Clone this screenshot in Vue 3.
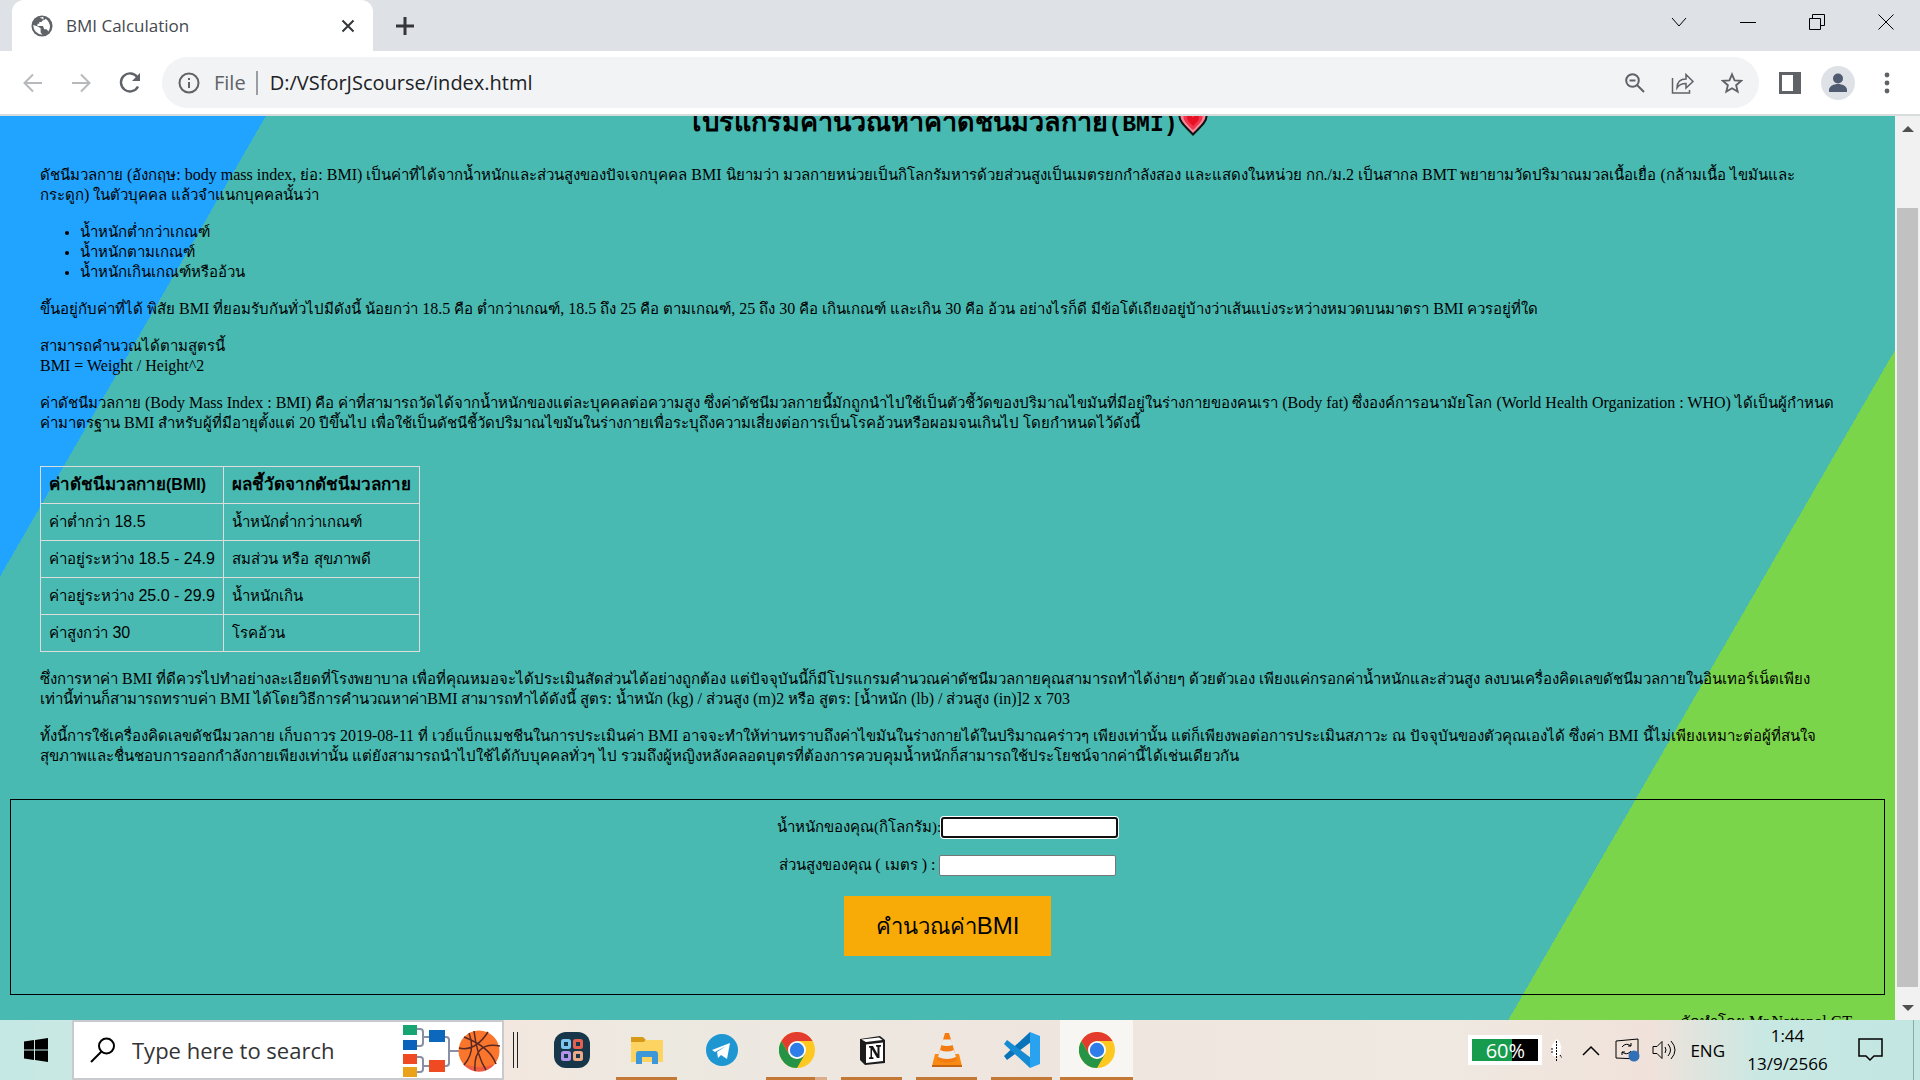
<script setup>
import { ref, onMounted } from 'vue'

const weight = ref('')
const height = ref('')
const weightInput = ref(null)

const intro = [
  'ดัชนีมวลกาย (อังกฤษ: body mass index, ย่อ: BMI) เป็นค่าที่ได้จากน้ำหนักและส่วนสูงของปัจเจกบุคคล BMI นิยามว่า มวลกายหน่วยเป็นกิโลกรัมหารด้วยส่วนสูงเป็นเมตรยกกำลังสอง และแสดงในหน่วย กก./ม.2 เป็นสากล BMT พยายามวัดปริมาณมวลเนื้อเยื่อ (กล้ามเนื้อ ไขมันและ',
  'กระดูก) ในตัวบุคคล แล้วจำแนกบุคคลนั้นว่า',
]
const groups = ['น้ำหนักต่ำกว่าเกณฑ์', 'น้ำหนักตามเกณฑ์', 'น้ำหนักเกินเกณฑ์หรืออ้วน']
const details = [
  ['ขึ้นอยู่กับค่าที่ได้ พิสัย BMI ที่ยอมรับกันทั่วไปมีดังนี้ น้อยกว่า 18.5 คือ ต่ำกว่าเกณฑ์, 18.5 ถึง 25 คือ ตามเกณฑ์, 25 ถึง 30 คือ เกินเกณฑ์ และเกิน 30 คือ อ้วน อย่างไรก็ดี มีข้อโต้เถียงอยู่บ้างว่าเส้นแบ่งระหว่างหมวดบนมาตรา BMI ควรอยู่ที่ใด'],
  ['สามารถคำนวณได้ตามสูตรนี้', 'BMI = Weight / Height^2'],
  [
    'ค่าดัชนีมวลกาย (Body Mass Index : BMI) คือ ค่าที่สามารถวัดได้จากน้ำหนักของแต่ละบุคคลต่อความสูง ซึ่งค่าดัชนีมวลกายนี้มักถูกนำไปใช้เป็นตัวชี้วัดของปริมาณไขมันที่มีอยู่ในร่างกายของคนเรา (Body fat) ซึ่งองค์การอนามัยโลก (World Health Organization : WHO) ได้เป็นผู้กำหนด',
    'ค่ามาตรฐาน BMI สำหรับผู้ที่มีอายุตั้งแต่ 20 ปีขึ้นไป เพื่อใช้เป็นดัชนีชี้วัดปริมาณไขมันในร่างกายเพื่อระบุถึงความเสี่ยงต่อการเป็นโรคอ้วนหรือผอมจนเกินไป โดยกำหนดไว้ดังนี้',
  ],
]
const headings = ['ค่าดัชนีมวลกาย(BMI)', 'ผลชี้วัดจากดัชนีมวลกาย']
const rows = [
  ['ค่าต่ำกว่า 18.5', 'น้ำหนักต่ำกว่าเกณฑ์'],
  ['ค่าอยู่ระหว่าง 18.5 - 24.9', 'สมส่วน หรือ สุขภาพดี'],
  ['ค่าอยู่ระหว่าง 25.0 - 29.9', 'น้ำหนักเกิน'],
  ['ค่าสูงกว่า 30', 'โรคอ้วน'],
]
const notes = [
  [
    'ซึ่งการหาค่า BMI ที่ดีควรไปทำอย่างละเอียดที่โรงพยาบาล เพื่อที่คุณหมอจะได้ประเมินสัดส่วนได้อย่างถูกต้อง แต่ปัจจุบันนี้ก็มีโปรแกรมคำนวณค่าดัชนีมวลกายคุณสามารถทำได้ง่ายๆ ด้วยตัวเอง เพียงแค่กรอกค่าน้ำหนักและส่วนสูง ลงบนเครื่องคิดเลขดัชนีมวลกายในอินเทอร์เน็ตเพียง',
    'เท่านี้ท่านก็สามารถทราบค่า BMI ได้โดยวิธีการคำนวณหาค่าBMI สามารถทำได้ดังนี้ สูตร: น้ำหนัก (kg) / ส่วนสูง (m)2 หรือ สูตร: [น้ำหนัก (lb) / ส่วนสูง (in)]2 x 703',
  ],
  [
    'ทั้งนี้การใช้เครื่องคิดเลขดัชนีมวลกาย เก็บถาวร 2019-08-11 ที่ เวย์แบ็กแมชชีนในการประเมินค่า BMI อาจจะทำให้ท่านทราบถึงค่าไขมันในร่างกายได้ในปริมาณคร่าวๆ เพียงเท่านั้น แต่ก็เพียงพอต่อการประเมินสภาวะ ณ ปัจจุบันของตัวคุณเองได้ ซึ่งค่า BMI นี้ไม่เพียงเหมาะต่อผู้ที่สนใจ',
    'สุขภาพและชื่นชอบการออกกำลังกายเพียงเท่านั้น แต่ยังสามารถนำไปใช้ได้กับบุคคลทั่วๆ ไป รวมถึงผู้หญิงหลังคลอดบุตรที่ต้องการควบคุมน้ำหนักก็สามารถใช้ประโยชน์จากค่านี้ได้เช่นเดียวกัน',
  ],
]

// Splits a line into Thai and Latin runs, since the two scripts are set at different sizes.
const runs = (text) =>
  text.split(/([\u0e00-\u0e7f]+)/).filter(Boolean).map((part) => ({
    text: part,
    kind: /[\u0e00-\u0e7f]/.test(part) ? 'thai' : 'latin',
  }))

onMounted(() => weightInput.value.focus())
</script>

<template>
  <div class="screen">
    <header class="tabs">
      <div class="tab">
        <svg class="globe" viewBox="0 0 24 24"><circle cx="12" cy="12" r="11.5" fill="#5f6368" /><path d="M2.500 11l5 1.500 3 2v4.500l2 2.500A10 10 0 0 1 2.500 11zM9.500 3l4-1v3l-2 2.500h-2.500v2h-2v2.500h6l1.500 3.500h2.500l2 2.500a10 10 0 0 0-3-14l-2 2-1.500-2z" fill="#fff" /></svg>
        <span class="title">BMI Calculation</span>
        <button class="plain" aria-label="Close tab"><svg width="14" height="14" viewBox="0 0 14 14"><path d="M1.500 1.500l11 11M12.500 1.500l-11 11" /></svg></button>
      </div>
      <button class="plain plus" aria-label="New tab"><svg width="18" height="18" viewBox="0 0 18 18"><path d="M9 0v18M0 9h18" /></svg></button>
      <div class="window-controls">
        <button class="plain" aria-label="Search tabs"><svg width="16" height="16" viewBox="0 0 16 16"><path d="M1 4l7 8 7-8" /></svg></button>
        <button class="plain" aria-label="Minimize"><svg width="16" height="16" viewBox="0 0 16 16"><path d="M0 8.500h16" /></svg></button>
        <button class="plain" aria-label="Restore"><svg width="16" height="16" viewBox="0 0 16 16"><path d="M.5 4.500h11v11H.5zM3.500 4.500v-4h12v11h-4" /></svg></button>
        <button class="plain" aria-label="Close"><svg width="16" height="16" viewBox="0 0 16 16"><path d="M.5.5l15 15M15.500.5l-15 15" /></svg></button>
      </div>
    </header>

    <nav class="toolbar">
      <button class="plain faded" aria-label="Back"><svg width="20" height="20" viewBox="0 0 20 20"><path d="M19 10H2M10 1.500L1.500 10l8.500 8.500" /></svg></button>
      <button class="plain faded" aria-label="Forward"><svg width="20" height="20" viewBox="0 0 20 20"><path d="M1 10h17M10 1.500l8.500 8.500-8.500 8.500" /></svg></button>
      <button class="plain" aria-label="Reload"><svg width="22" height="22" viewBox="0 0 22 22"><path d="M18.500 5.500A9 9 0 1 0 19 14.500" stroke-width="2.400" /><path d="M21 1v8h-8z" fill="#5f6368" stroke="none" /></svg></button>
      <div class="address">
        <svg width="22" height="22" viewBox="0 0 22 22"><circle cx="11" cy="11" r="9.500" /><path d="M11 10v6M11 6v2" /></svg>
        <span class="scheme">File</span>
        <span class="url">D:/VSforJScourse/index.html</span>
        <button class="plain" aria-label="Zoom"><svg width="20" height="20" viewBox="0 0 20 20"><circle cx="7.500" cy="7.500" r="6.300" /><path d="M12 12l7 7M4.500 7.500h6" /></svg></button>
        <button class="plain" aria-label="Share"><svg width="24" height="22" viewBox="0 0 24 22"><path class="thin" d="M1.500 6v15h17v-3M6 16c0-7 4-9 9-9V2.500l7 7-7 6.500v-4.500c-4 0-7 1-9 4.500z" /></svg></button>
        <button class="plain" aria-label="Bookmark"><svg width="22" height="22" viewBox="0 0 24 24"><path d="M12 2.500l2.800 6.600 7.200.6-5.500 4.700 1.700 7-6.200-3.700-6.200 3.700 1.700-7L2 9.700l7.200-.6z" /></svg></button>
      </div>
      <button class="plain panel" aria-label="Side panel"><svg width="22" height="22" viewBox="0 0 22 22"><path d="M0 0h22v22H0zM3 3v16h11V3z" fill="#5f6368" fill-rule="evenodd" stroke="none" /></svg></button>
      <button class="plain" aria-label="Profile"><svg width="34" height="34" viewBox="0 0 34 34"><g stroke="none"><circle cx="17" cy="17" r="17" fill="#dee1e6" /><circle cx="17" cy="12.500" r="5" fill="#4f5b70" /><path d="M8 26v-2c0-4 5-6 9-6s9 2 9 6v2z" fill="#4f5b70" /></g></svg></button>
      <button class="plain" aria-label="Menu"><svg width="8" height="22" viewBox="0 0 8 22"><g fill="#5f6368" stroke="none"><circle cx="4" cy="3" r="2.400" /><circle cx="4" cy="11" r="2.400" /><circle cx="4" cy="19" r="2.400" /></g></svg></button>
    </nav>

    <div class="viewport">
      <main class="page">
        <h1><span v-for="(run, i) in runs('โปรแกรมคำนวณหาค่าดัชนีมวลกาย(BMI)')" :key="i" :class="run.kind">{{ run.text }}</span><svg class="heart" viewBox="0 0 30 28"><path d="M15 26.500C9 20 1.500 14.500 1.500 8.500 1.500 1 11.500-.5 15 6.500 18.500-.5 28.500 1 28.500 8.500c0 6-7.500 11.500-13.500 18z" fill="#f58a9b" stroke="#111" stroke-width="2" /><path d="M15 22C9 16 5.500 13 5.500 9c0-5 7.500-5.500 9.500 0 2-5.500 9.500-5 9.500 0 0 4-3.500 7-9.500 13z" fill="#f0354c" /><path d="M15 18c-4-4-6-6-6-8.500 0-3 4.500-3 6 .5 1.500-3.500 6-3.500 6-.5 0 2.500-2 4.500-6 8.500z" fill="#e81123" /></svg></h1>
        <article>
          <p><span v-for="line in intro" :key="line" class="line"><span v-for="(run, i) in runs(line)" :key="i" :class="run.kind">{{ run.text }}</span></span></p>
          <ul>
            <li v-for="group in groups" :key="group">{{ group }}</li>
          </ul>
          <p v-for="(lines, n) in details" :key="n"><span v-for="line in lines" :key="line" class="line"><span v-for="(run, i) in runs(line)" :key="i" :class="run.kind">{{ run.text }}</span></span></p>
          <table>
            <thead><tr><th v-for="cell in headings" :key="cell"><span v-for="(run, i) in runs(cell)" :key="i" :class="run.kind">{{ run.text }}</span></th></tr></thead>
            <tbody><tr v-for="row in rows" :key="row[0]"><td v-for="cell in row" :key="cell"><span v-for="(run, i) in runs(cell)" :key="i" :class="run.kind">{{ run.text }}</span></td></tr></tbody>
          </table>
          <p v-for="(lines, n) in notes" :key="n"><span v-for="line in lines" :key="line" class="line"><span v-for="(run, i) in runs(line)" :key="i" :class="run.kind">{{ run.text }}</span></span></p>
        </article>
        <form @submit.prevent>
          <div class="field"><label for="weight">น้ำหนักของคุณ(กิโลกรัม):</label><input id="weight" ref="weightInput" v-model="weight" class="active" type="text"></div>
          <div class="field"><label for="height">ส่วนสูงของคุณ <span class="latin">( </span>เมตร<span class="latin"> ) :&nbsp;</span></label><input id="height" v-model="height" type="text"></div>
          <button class="submit" type="submit">คำนวณค่า<span class="latin">BMI</span></button>
        </form>
        <footer>จัดทำโดย <span class="latin">Mr.Nattapol GT</span></footer>
      </main>
      <div class="scrollbar">
        <svg width="12" height="6" viewBox="0 0 12 6"><path d="M0 6l6-6 6 6z" fill="#505050" /></svg>
        <div class="track"><div class="thumb"></div></div>
        <svg width="12" height="6" viewBox="0 0 12 6"><path d="M0 0l6 6 6-6z" fill="#505050" /></svg>
      </div>
    </div>

    <div class="taskbar">
      <button class="plain start" aria-label="Start"><svg width="24" height="24" viewBox="0 0 24 24"><path d="M0 3.500L10 2v9.500H0zM11 1.900L24 0v11.500H11zM0 12.500h10V22L0 20.500zM11 12.500h13V24l-13-1.900z" fill="#000" stroke="none" /></svg></button>
      <label class="search">
        <svg class="lens" width="26" height="26" viewBox="0 0 26 26"><circle cx="16.500" cy="9" r="7.500" /><path d="M11.500 14.500L1 25" /></svg>
        <input type="text" placeholder="Type here to search" aria-label="Search">
        <svg class="art" width="98" height="54" viewBox="0 0 98 54">
          <g fill="none" stroke="#8b8fa3" stroke-width="2"><path d="M14 6h4q3 0 3 3v11q0 3-3 3h-4M21 14h6M14 34h4q3 0 3 3v9q0 3-3 3h-4M21 43h6M42 14h2q3 0 3 3v23q0 3-3 3h-2M47 28h10" /></g>
          <path d="M1 2h14v10H1z" fill="#17a673" /><path d="M1 17h14v10H1z" fill="#0b62bb" /><path d="M1 31h14v10H1z" fill="#f04a23" /><path d="M1 44h14v10H1z" fill="#eaa21a" /><path d="M27 7h16v12H27z" fill="#0b68bd" /><path d="M27 37h16v12H27z" fill="#f04a23" />
          <circle cx="77" cy="28" r="20.500" fill="#fa762d" /><path d="M61 41a20.500 20.500 0 0 0 32 0q-16 6-32 0z" fill="#e74a4e" opacity=".6" />
          <g fill="none" stroke="#5b2822" stroke-width="1.500"><path d="M62 14q26 10 32 27M57 25q16 4 29-16M73 48q-2-30 25-25M62 42q12-14 5-32M84 47q-9-14-12-39" /></g>
        </svg>
      </label>
      <div class="grip"></div>
      <div class="apps">
        <button class="app" aria-label="Launcher"><svg viewBox="0 0 36 36"><rect width="36" height="36" rx="12" fill="#17364a" /><g fill="none" stroke-width="3"><rect x="8.500" y="8.500" width="7" height="7" rx="1" stroke="#7cc5f0" /><rect x="20.500" y="8.500" width="7" height="7" rx="1" stroke="#e75f4f" /><rect x="8.500" y="20.500" width="7" height="7" rx="1" stroke="#b294e8" /><rect x="20.500" y="20.500" width="7" height="7" rx="1" stroke="#eda987" /></g></svg></button>
        <button class="app open" aria-label="File Explorer"><svg viewBox="0 0 36 36"><path d="M2 5h12l3 3-3 3H2z" fill="#d69a17" /><path d="M2 10h13l2-2h17v22H2z" fill="#fdd462" /><path d="M7 32V22q0-3 3-3h16q3 0 3 3v10h-6v-7H13v7z" fill="#3d97d8" /></svg></button>
        <button class="app" aria-label="Telegram"><svg viewBox="0 0 36 36"><circle cx="18" cy="18" r="16" fill="#1e96d1" /><path d="M8 18l18-7-3 16-6-4-3 3-1-6 9-6-11 6z" fill="#fff" /></svg></button>
        <button class="app open stack" aria-label="Chrome"><svg viewBox="0 0 36 36"><circle cx="18" cy="18" r="18" fill="#ffc820" /><path d="M2.400 9A18 18 0 0 1 33.600 9H18l-7.800 13.500z" fill="#e33b2e" /><path d="M2.400 9A18 18 0 0 0 18 36l7.800-13.500h-15.600z" fill="#269447" /><circle cx="18" cy="18" r="9" fill="#fff" /><circle cx="18" cy="18" r="7.200" fill="#2f7de9" /></svg></button>
        <button class="app open" aria-label="Notion"><svg viewBox="0 0 36 36"><path d="M6 7l20-3 5 4v23l-20 2-5-5z" fill="#1c1c1c" /><path d="M7.500 7.500L25 5.500l3.500 2.500L12 10zM12 12.500l17-2v18.500l-17 2z" fill="#fff" /><path d="M15 27v-1.500l1.500-.5V16l-1.500-.5V14h4l4.500 8v-7l-1.500-.5V13h5v1.500l-1.500.5v11h-2.500l-5-8.500V25l1.500.5V27z" fill="#161616" /></svg></button>
        <button class="app open" aria-label="VLC"><svg viewBox="0 0 36 36"><path d="M6 22h24l3 12H3z" fill="#f98b14" /><path d="M16 1h4l8 27q-10 6-20 0z" fill="#f27c12" /><path d="M14 7.500h8l2 5.500q-6 2-12 0zM11 18q7 3 14 0l2 7q-9 4-18 0z" fill="#ebebe8" /><path d="M3 33h30v2H3z" fill="#c86410" /></svg></button>
        <button class="app open" aria-label="Visual Studio Code"><svg viewBox="0 0 36 36"><path d="M26 0L0 24l3 4 24-18z" fill="#0873b8" /><path d="M26 36L0 12l3-4 24 18z" fill="#168bd3" /><path d="M26 0l10 4v28l-10 4z" fill="#29a2ef" /></svg></button>
        <button class="app open current" aria-label="Chrome, BMI Calculation"><svg viewBox="0 0 36 36"><circle cx="18" cy="18" r="18" fill="#ffc820" /><path d="M2.400 9A18 18 0 0 1 33.600 9H18l-7.800 13.500z" fill="#e33b2e" /><path d="M2.400 9A18 18 0 0 0 18 36l7.800-13.500h-15.600z" fill="#269447" /><circle cx="18" cy="18" r="9" fill="#fff" /><circle cx="18" cy="18" r="7.200" fill="#2f7de9" /></svg></button>
      </div>
      <div class="tray">
        <span class="battery">60%</span>
        <svg class="plug" width="11" height="22" viewBox="0 0 11 22"><path d="M6 0q5 5 4 11 0 6-5 7-5-1-5-7 1-7 6-11z" fill="#fff" stroke="none" /><path d="M5.500 2v20M1 9v6M9 16l2 3" stroke-dasharray="2 1" /></svg>
        <svg width="18" height="11" viewBox="0 0 18 11"><path d="M1 10l8-8 8 8" stroke-width="1.500" /></svg>
        <svg class="sync" width="25" height="24" viewBox="0 0 25 24"><path d="M1 3l22-2v20L1 20zM7 9q4-5 9-1v-3M16 8h-3M16 13q-4 5-9 1v3M7 14h3" /><circle cx="19" cy="18" r="5.500" fill="#3170b7" stroke="none" /></svg>
        <svg class="sound" width="24" height="20" viewBox="0 0 24 20"><path d="M1 6.500h4l5-5v17l-5-5H1zM13 7q2 3 0 6M16 4q5 6 0 12M19 1q8 9 0 18" /></svg>
        <span class="lang">ENG</span>
        <time><span>1:44</span><span>13/9/2566</span></time>
        <svg class="note" width="25" height="24" viewBox="0 0 25 24"><path d="M1 1h23v17h-8l-4 4-4-4H1z" stroke-width="1.500" /></svg>
        <span class="peek"></span>
      </div>
    </div>
  </div>
</template>

<style>
body { margin: 0; }
</style>

<style scoped>
* { box-sizing: border-box; }
.screen { display: flex; flex-direction: column; height: 100vh; min-height: 600px; overflow: hidden; color: #000; font-family: "Open Sans", "Noto Sans", sans-serif; }
svg { display: block; flex-shrink: 0; fill: none; stroke: #5f6368; stroke-width: 2; }
.viewport svg, .app svg, .globe, .art { stroke: none; }
.plain { display: flex; align-items: center; justify-content: center; flex-shrink: 0; padding: 0; border: 0; background: none; }

/* Browser window */
.tabs { display: flex; align-items: stretch; flex-shrink: 0; height: 51px; padding-left: 12px; background: #dee1e6; }
.tab { display: flex; align-items: center; gap: 13px; width: 361px; padding: 0 18px 0 19px; border-radius: 12px 12px 0 0; background: #fff; }
.globe { width: 22px; height: 22px; }
.title { flex: 1; color: #45484d; font: 17px "Open Sans", sans-serif; }
.tab .plain svg { stroke: #35363a; stroke-width: 2; }
.plus { width: 64px; }
.plus svg { stroke: #35363a; stroke-width: 3; }
.window-controls { display: flex; margin-left: auto; height: 43px; }
.window-controls .plain { width: 69px; }
.window-controls svg { stroke: #000; stroke-width: 1; }
.toolbar { display: flex; align-items: center; flex-shrink: 0; gap: 28px; height: 65px; padding: 0 29px 0 23px; border-bottom: 2px solid #d9dcdd; background: #fff; }
.faded svg { stroke: #b7b9bc; }
.address { display: flex; flex: 1; align-items: center; gap: 26px; height: 51px; margin: 0 -8px 0 -7px; padding: 0 16px; border-radius: 26px; background: #f1f3f4; font-size: 20px; }
.scheme { margin-left: -12px; padding-right: 10px; border-right: 2px solid #9a9da1; color: #5f6368; line-height: 24px; }
.url { flex: 1; margin-left: -14px; color: #202124; }
.panel { margin-right: -8px; }
.thin { stroke-width: 1.500; }

/* Page */
.viewport { display: flex; flex: 1; min-height: 0; }
.page { flex: 1; min-width: 0; overflow: hidden; background: linear-gradient(120deg, #20a4ff 11%, #48bab2 11% 84%, #7bd54a 84%); font: 15px/20px "Liberation Serif", serif; }
.latin { font-size: 16px; line-height: 1; }
.line { display: block; }
h1 { margin: -8px 0 0; font: bold 27px/32px "Liberation Mono", monospace; text-align: center; white-space: nowrap; }
h1 .latin, .submit .latin { font-size: 24px; }
h1 .latin { font-size: 23px; }
.heart { display: inline-block; width: 30px; height: 28px; vertical-align: -5px; }
article { padding: 0 40px; white-space: nowrap; }
p { margin: 0 0 17px; }
article p:first-child { margin-top: 25px; }
ul { margin: 0 0 17px; padding-left: 40px; }
table { margin: 33px 0 17px; border-collapse: collapse; font: 15px/20px "Liberation Sans", sans-serif; }
th, td { height: 37px; padding: 8px; border: 1px solid #ddd; text-align: left; }
th { font-size: 17px; }
form { display: flex; flex-direction: column; align-items: center; height: 196px; margin: 33px 10px 17px; padding-top: 16px; border: 1px solid #000; }
.field { display: flex; align-items: center; height: 22px; margin-bottom: 16px; white-space: nowrap; }
.field input { width: 177px; height: 21px; border: 1px solid #767676; border-radius: 2px; outline: none; background: #fff; }
.field .active { border: 2px solid #101010; box-shadow: 0 0 0 1px #fff; border-radius: 3px; }
.submit { width: 207px; height: 60px; margin-top: 4px; padding: 2px 0 0; border: 0; background: #f8ab07; color: #000; font: 22px/28px "Liberation Sans", sans-serif; }
footer { padding-right: 43px; text-align: right; }
.scrollbar { display: flex; flex-direction: column; align-items: center; width: 25px; padding: 10px 0 9px; background: #f1f1f1; }
.track { flex: 1; width: 21px; margin: 10px 0 18px; padding-top: 66px; }
.thumb { height: 100%; background: #c1c1c1; }

/* Taskbar */
.taskbar { display: flex; flex-shrink: 0; height: 60px; background: linear-gradient(90deg, #c4e8e4 0, #d9e8e1 15%, #f3e7df 26%, #ece9e1 35%, #efe5df 55%, #efe9e1 75%, #f0e2db 86%, #c8e8e3 92%, #c2e6e2 100%); }
.taskbar svg { stroke: #000; stroke-width: 1; }
.taskbar .app svg, .taskbar .art { stroke: none; }
.start { width: 72px; }
.search { display: flex; align-items: center; width: 432px; padding: 0 2px 0 16px; border: 2px solid #c9cacd; background: #fff; }
.search input { flex: 1; width: 0; margin-left: 16px; padding: 0; border: 0; outline: 0; background: none; font: 22px "Open Sans", sans-serif; }
.search input::placeholder { color: #333; opacity: 1; }
.taskbar .lens { stroke-width: 2; }
.grip { width: 5px; height: 36px; margin: 12px 17px 0 9px; border: solid #222; border-width: 0 1px; }
.apps { display: flex; gap: 2px; }
.app { display: flex; align-items: center; justify-content: center; width: 73px; padding: 0; border: 0; background: linear-gradient(#c47835, #c47835) no-repeat center bottom / 0 3px; }
.app svg { width: 36px; height: 36px; }
.open { background-size: 61px 3px; }
.stack { background-image: linear-gradient(90deg, #c47835 80%, #dcae8b 80%); }
.current { background: linear-gradient(#c47835, #c47835) no-repeat center bottom / 100% 3px, #f8f6f3; }
.tray { display: flex; align-items: center; margin-left: auto; }
.battery { width: 74px; height: 30px; margin-right: 9px; border: 4px solid #fff; background: linear-gradient(90deg, #179b4c 60%, #000 60%); color: #fff; font: 20px/24px "Open Sans", sans-serif; text-align: center; }
.plug { margin-right: 20px; }
.sync { margin-left: 15px; }
.sound { margin: 0 14px 0 12px; }
.lang { font-size: 17px; }
time { display: flex; flex-direction: column; width: 105px; margin-left: 10px; font-size: 17px; line-height: 28px; text-align: center; }
.note { margin: 0 30px 0 18px; }
.peek { align-self: stretch; width: 7px; border-left: 1px solid #8fa9a7; }
</style>
